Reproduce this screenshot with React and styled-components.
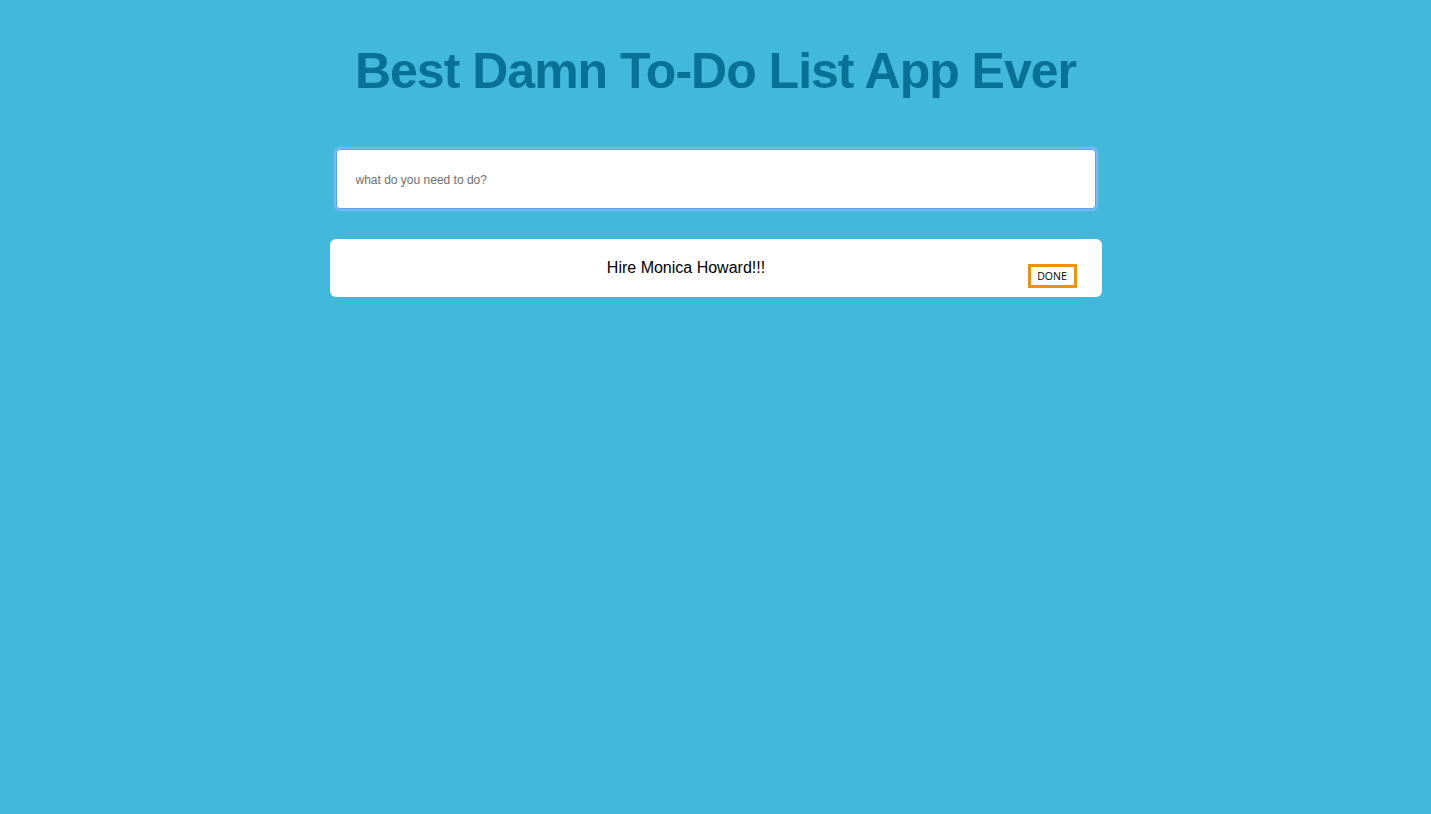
import styled, { createGlobalStyle } from 'styled-components';

const GlobalStyle = createGlobalStyle`
  html, body {
    margin: 0;
    padding: 0;
    background: #42b9db;
    font-family: "Liberation Sans", Arial, sans-serif;
  }
`;

const Page = styled.div`
  min-height: 814px;
  display: flex;
  flex-direction: column;
  align-items: center;
  padding-top: 39px;
  box-sizing: border-box;
`;

const Title = styled.h1`
  margin: 0;
  font-size: 50px;
  line-height: 64px;
  font-weight: 700;
  color: #077196;
  letter-spacing: -1px;
`;

const Form = styled.form`
  width: 772px;
  margin-top: 46px;
  display: flex;
  justify-content: center;
`;

const Input = styled.input`
  width: 760px;
  height: 60px;
  box-sizing: border-box;
  border: 1px solid #5aa2ee;
  border-radius: 4px;
  box-shadow: 0 0 2px 2px #7cbaf7;
  background: #fff;
  padding: 2px 19px 0;
  font-family: "Liberation Sans", Arial, sans-serif;
  font-size: 12px;
  color: #333;
  outline: none;

  &::placeholder {
    color: #6f6f6f;
  }
`;

const List = styled.ul`
  list-style: none;
  margin: 30px 0 0;
  padding: 0;
  width: 772px;
`;

const Item = styled.li`
  height: 58px;
  background: #fff;
  border-radius: 6px;
  display: flex;
  align-items: center;
  padding-left: 15px;
  padding-right: 25px;
  box-sizing: border-box;
`;

const ItemText = styled.span`
  flex: 1;
  text-align: center;
  font-size: 16px;
  color: #000;
`;

const DoneButton = styled.button`
  align-self: flex-end;
  margin-bottom: 9px;
  width: 49px;
  height: 24px;
  box-sizing: border-box;
  border: 3px solid #f0920a;
  background: #fff;
  padding: 0;
  font-family: "Open Sans", "Liberation Sans", sans-serif;
  font-size: 10.5px;
  color: #000;
  cursor: pointer;
`;

export default function App() {
  return (
    <>
      <GlobalStyle />
      <Page>
        <Title>Best Damn To-Do List App Ever</Title>
        <Form onSubmit={(e) => e.preventDefault()}>
          <Input placeholder="what do you need to do?" autoFocus />
        </Form>
        <List>
          <Item>
            <ItemText>Hire Monica Howard!!!</ItemText>
            <DoneButton type="button">DONE</DoneButton>
          </Item>
        </List>
      </Page>
    </>
  );
}
